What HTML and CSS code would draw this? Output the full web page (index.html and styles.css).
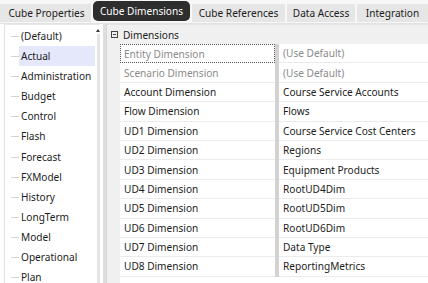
FILE: index.html
```html
<!DOCTYPE html>
<html>
<head>
<meta charset="utf-8">
<link rel="stylesheet" href="styles.css">
</head>
<body>
<div class="tabs">
  <div class="tab t1">Cube Properties</div>
  <div class="tab t2 active">Cube Dimensions</div>
  <div class="tab t3">Cube References</div>
  <div class="tab t4">Data Access</div>
  <div class="tab t5">Integration</div>
</div>
<div class="main">
  <div class="left">
    <div class="list">
      <div class="item">(Default)</div>
      <div class="item selected">Actual</div>
      <div class="item">Administration</div>
      <div class="item">Budget</div>
      <div class="item">Control</div>
      <div class="item">Flash</div>
      <div class="item">Forecast</div>
      <div class="item">FXModel</div>
      <div class="item">History</div>
      <div class="item">LongTerm</div>
      <div class="item">Model</div>
      <div class="item">Operational</div>
      <div class="item">Plan</div>
    </div>
    <div class="scrollbar">
      <div class="arrow"></div>
      <div class="track"></div>
    </div>
  </div>
  <div class="splitter"></div>
  <div class="grid">
    <div class="header">
      <span class="toggle"></span>
      <span class="htext">Dimensions</span>
    </div>
    <div class="row">
      <div class="indent"></div>
      <div class="label muted focus">Entity Dimension</div>
      <div class="sep"></div>
      <div class="value muted">(Use Default)</div>
    </div>
    <div class="row">
      <div class="indent"></div>
      <div class="label muted">Scenario Dimension</div>
      <div class="sep"></div>
      <div class="value muted">(Use Default)</div>
    </div>
    <div class="row">
      <div class="indent"></div>
      <div class="label">Account Dimension</div>
      <div class="sep"></div>
      <div class="value">Course Service Accounts</div>
    </div>
    <div class="row">
      <div class="indent"></div>
      <div class="label">Flow Dimension</div>
      <div class="sep"></div>
      <div class="value">Flows</div>
    </div>
    <div class="row">
      <div class="indent"></div>
      <div class="label">UD1 Dimension</div>
      <div class="sep"></div>
      <div class="value">Course Service Cost Centers</div>
    </div>
    <div class="row">
      <div class="indent"></div>
      <div class="label">UD2 Dimension</div>
      <div class="sep"></div>
      <div class="value">Regions</div>
    </div>
    <div class="row">
      <div class="indent"></div>
      <div class="label">UD3 Dimension</div>
      <div class="sep"></div>
      <div class="value">Equipment Products</div>
    </div>
    <div class="row">
      <div class="indent"></div>
      <div class="label">UD4 Dimension</div>
      <div class="sep"></div>
      <div class="value">RootUD4Dim</div>
    </div>
    <div class="row">
      <div class="indent"></div>
      <div class="label">UD5 Dimension</div>
      <div class="sep"></div>
      <div class="value">RootUD5Dim</div>
    </div>
    <div class="row">
      <div class="indent"></div>
      <div class="label">UD6 Dimension</div>
      <div class="sep"></div>
      <div class="value">RootUD6Dim</div>
    </div>
    <div class="row">
      <div class="indent"></div>
      <div class="label">UD7 Dimension</div>
      <div class="sep"></div>
      <div class="value">Data Type</div>
    </div>
    <div class="row">
      <div class="indent"></div>
      <div class="label">UD8 Dimension</div>
      <div class="sep"></div>
      <div class="value">ReportingMetrics</div>
    </div>
    <div class="filler">
      <div class="indent"></div>
    </div>
  </div>
</div>
</body>
</html>
```

FILE: styles.css
```css
html, body {
  margin: 0;
  padding: 0;
  background: #ffffff;
  width: 428px;
  height: 283px;
  overflow: hidden;
  font-family: "Noto Sans", "Open Sans", sans-serif;
  font-size: 10.1px;
  color: #1c1c1c;
}

.tabs {
  display: flex;
  gap: 2px;
  background: #f7f7f7;
  border-bottom: 1px solid #e2e2e2;
  box-sizing: border-box;
  height: 24px;
}

.tab {
  flex-shrink: 0;
  margin-top: 4px;
  height: 18px;
  background: #e6e6e6;
  display: flex;
  align-items: center;
  justify-content: center;
  white-space: nowrap;
  color: #1c1c1c;
}

.t1 { width: 91px; padding-left: 2px; box-sizing: border-box; }
.t2 { width: 97px; }
.t3 { width: 93px; }
.t4 { width: 68px; }
.t5 { flex: 1; }

.tab.active {
  margin-top: 1px;
  height: 20px;
  background: #2e2e2e;
  color: #ffffff;
  border-radius: 5px;
}

.main {
  display: flex;
  height: 259px;
}

.left {
  flex-shrink: 0;
  display: flex;
  margin-left: 4px;
  width: 96px;
  border-left: 1px solid #e0e0e0;
  border-top: 1px solid #e8e8e8;
  box-sizing: border-box;
  padding-top: 1px;
}

.list {
  flex: 1;
  display: flex;
  flex-direction: column;
}

.item {
  position: relative;
  flex-shrink: 0;
  height: 20.1px;
  line-height: 20px;
  padding-left: 16px;
  margin-right: 1px;
  white-space: nowrap;
}

.item::before {
  content: "";
  position: absolute;
  left: 6px;
  top: 10px;
  width: 8px;
  height: 1px;
  background: #d4d4d4;
}

.item.selected {
  background: linear-gradient(to right, transparent 14px, #e5e8fa 14px);
}

.scrollbar {
  flex-shrink: 0;
  width: 4px;
  display: flex;
  flex-direction: column;
  align-items: center;
}

.arrow {
  width: 0;
  height: 0;
  border-left: 2px solid transparent;
  border-right: 2px solid transparent;
  border-bottom: 3px solid #333333;
  margin-top: 3px;
  margin-bottom: 2px;
}

.track {
  flex: 1;
  width: 3px;
  background: #e4e4e4;
}

.splitter {
  flex-shrink: 0;
  width: 3px;
  margin-left: 3px;
  background: #dedede;
}

.grid {
  flex: 1;
  min-width: 0;
  display: flex;
  flex-direction: column;
  border-left: 1px solid #d6d6d6;
}

.header {
  flex-shrink: 0;
  height: 19px;
  background: #f0f0f0;
  display: flex;
  align-items: center;
  border-top: 1px solid #e4e4e4;
}

.toggle {
  position: relative;
  width: 5px;
  height: 5px;
  border: 1px solid #444444;
  margin-left: 4px;
  margin-right: 5px;
}

.toggle::after {
  content: "";
  position: absolute;
  left: 1px;
  top: 2px;
  width: 3px;
  height: 1px;
  background: #444444;
}

.htext {
  color: #1c1c1c;
}

.row {
  flex-shrink: 0;
  display: flex;
  height: 19.4px;
}

.indent {
  width: 13px;
  flex-shrink: 0;
  background: #f0f0f0;
}

.label, .value {
  box-sizing: border-box;
  border-bottom: 1px solid #ebebeb;
  display: flex;
  align-items: center;
  white-space: nowrap;
  overflow: hidden;
}

.label {
  width: 155px;
  flex-shrink: 0;
  padding-left: 4px;
}

.value {
  flex: 1;
  min-width: 0;
  padding-left: 4px;
}

.sep {
  flex-shrink: 0;
  width: 4px;
  background: #d2d2d2;
}

.muted {
  color: #8a8a8a;
}

.focus {
  border: 1px dotted #555555;
  padding-left: 3px;
}

.filler {
  flex: 1;
  display: flex;
}
```
